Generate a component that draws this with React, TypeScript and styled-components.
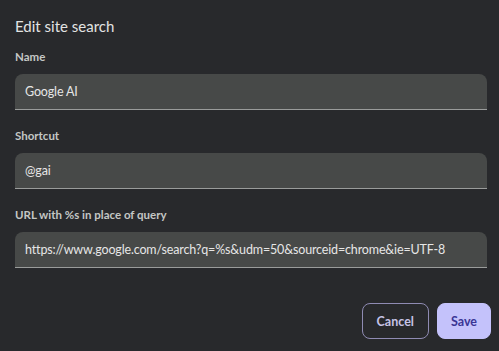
import { createGlobalStyle } from "styled-components";
import styled from "styled-components";

const GlobalStyle = createGlobalStyle`
  html, body {
    margin: 0;
    padding: 0;
    background: #28292c;
  }
  body {
    font-family: Lato, "Noto Sans", sans-serif;
    color: #e3e3e3;
  }
`;

const Dialog = styled.div`
  width: 499px;
  height: 351px;
  box-sizing: border-box;
  background: #28292c;
  display: flex;
  flex-direction: column;
`;

const Body = styled.div`
  padding: 16px 12px 0 15px;
  display: flex;
  flex-direction: column;
`;

const Title = styled.h1`
  margin: 0 0 13px;
  font-size: 15px;
  line-height: 20px;
  font-weight: 400;
  color: #e3e3e3;
`;

const Field = styled.div`
  display: flex;
  flex-direction: column;
  margin-bottom: 18px;
`;

const Label = styled.label`
  font-size: 11.5px;
  line-height: 16px;
  font-weight: 700;
  color: #c4c7c5;
  margin-bottom: 9px;
`;

const Input = styled.input`
  height: 36px;
  box-sizing: border-box;
  border: none;
  border-bottom: 1px solid #9a9c9b;
  border-radius: 8px 8px 0 0;
  background: #474948;
  color: #e6e6e6;
  font-family: Lato, "Noto Sans", sans-serif;
  font-size: 12.5px;
  letter-spacing: -0.15px;
  padding: 0 10px;
  outline: none;
`;

const Footer = styled.div`
  display: flex;
  justify-content: flex-end;
  gap: 8px;
  padding: 17px 8px 0 0;
`;

const Button = styled.button<{ $primary?: boolean }>`
  height: 36px;
  box-sizing: border-box;
  border-radius: 8px;
  font-family: Lato, "Noto Sans", sans-serif;
  font-size: 12.5px;
  font-weight: 700;
  cursor: pointer;
  padding: 0 ${(p) => (p.$primary ? "13px" : "14px")};
  border: 1px solid ${(p) => (p.$primary ? "#c4c2fb" : "#8f8bb3")};
  background: ${(p) => (p.$primary ? "#c4c2fb" : "transparent")};
  color: ${(p) => (p.$primary ? "#3a3595" : "#c6c3e6")};
`;

const fields = [
  { label: "Name", value: "Google AI" },
  { label: "Shortcut", value: "@gai" },
  {
    label: "URL with %s in place of query",
    value: "https://www.google.com/search?q=%s&udm=50&sourceid=chrome&ie=UTF-8",
  },
];

const App = () => {
  return (
    <>
      <GlobalStyle />
      <Dialog>
        <Body>
          <Title>Edit site search</Title>
          {fields.map((f) => (
            <Field key={f.label}>
              <Label>{f.label}</Label>
              <Input defaultValue={f.value} />
            </Field>
          ))}
        </Body>
        <Footer>
          <Button>Cancel</Button>
          <Button $primary>Save</Button>
        </Footer>
      </Dialog>
    </>
  );
};

export default App;
